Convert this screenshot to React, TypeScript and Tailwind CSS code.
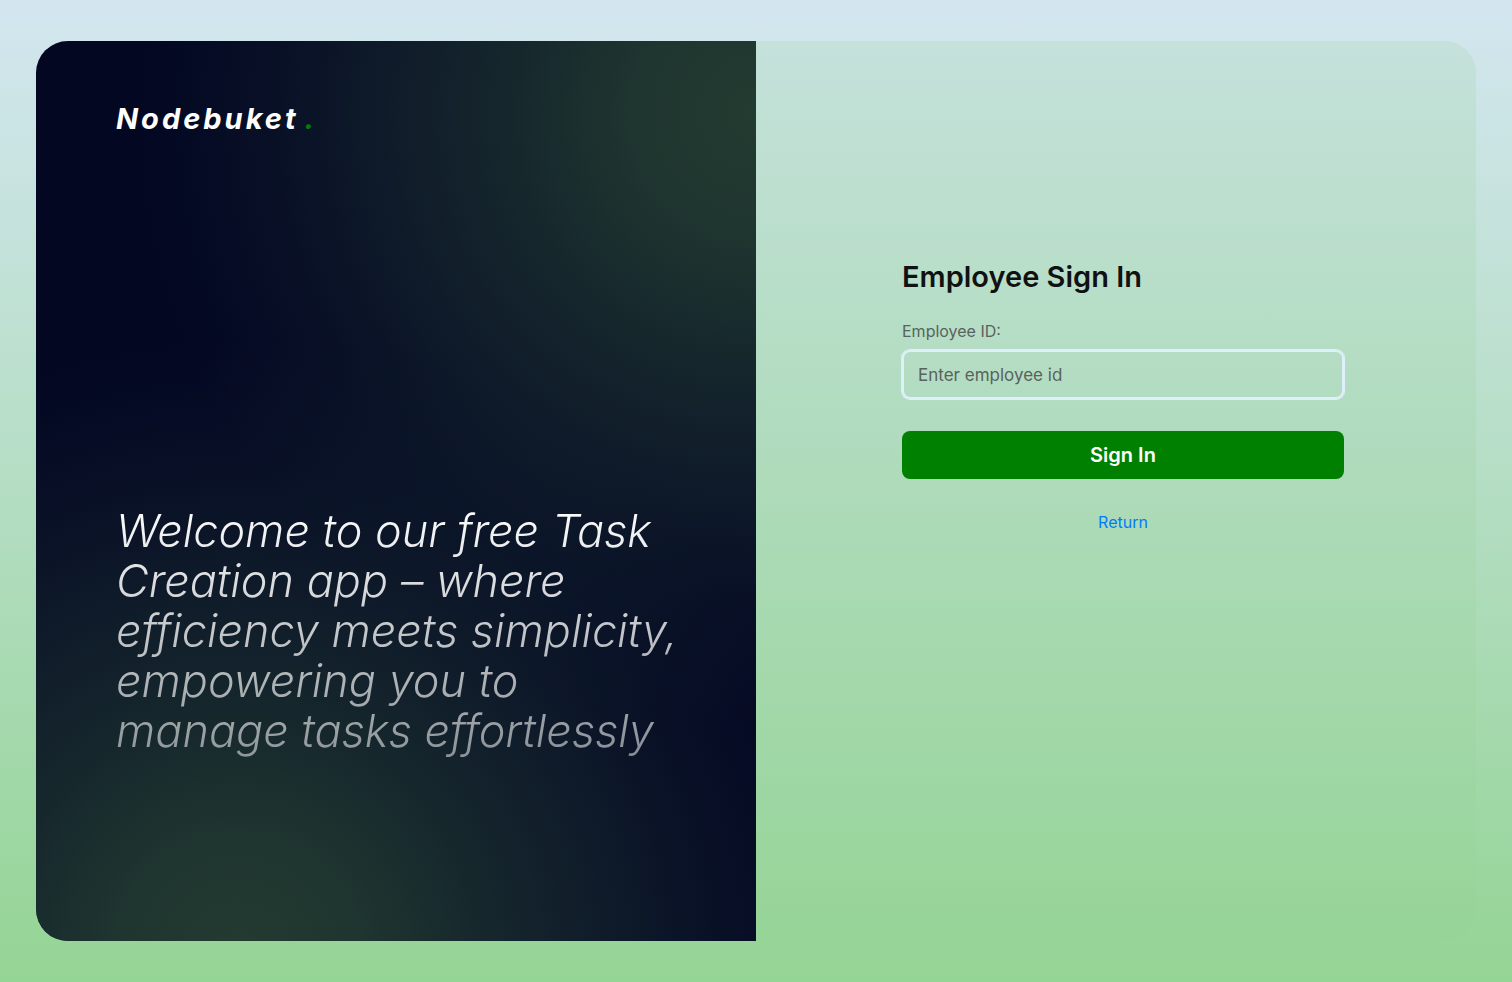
import React from "react";

function BrandPanel() {
  return (
    <section className="flex flex-col justify-between bg-[#030722] bg-[radial-gradient(circle_620px_at_100%_8%,#233b31ff_0%,#223a31e6_20%,#203832a6_40%,#1f36346b_60%,#1a2e3433_80%,#1a2e3400_100%),radial-gradient(circle_620px_at_28%_102%,#233b31ff_0%,#223a31e6_20%,#203832a6_40%,#1f36346b_60%,#1a2e3433_80%,#1a2e3400_100%)] px-20 pt-[60px] pb-[177px] text-white">
      <p className="text-[29px] leading-9 font-bold tracking-[3px] italic">
        Nodebuket<span className="pl-1.5 text-[#008000]">.</span>
      </p>
      <h1 className="bg-linear-to-b from-white to-white/50 bg-clip-text pb-2 text-[45px] leading-[50px] font-light whitespace-nowrap text-transparent italic">
        Welcome to our free Task
        <br />
        Creation app – where
        <br />
        efficiency meets simplicity,
        <br />
        empowering you to
        <br />
        manage tasks effortlessly
      </h1>
    </section>
  );
}

function SignInForm() {
  return (
    <form
      className="flex w-full max-w-[442px] flex-col"
      onSubmit={(event) => event.preventDefault()}
    >
      <h2 className="text-[29px] leading-9 font-semibold text-[#111111]">Employee Sign In</h2>
      <label htmlFor="employee-id" className="mt-6 text-base leading-6 text-[#59625c]">
        Employee ID:
      </label>
      <input
        id="employee-id"
        type="text"
        placeholder="Enter employee id"
        className="mt-[7px] h-[49px] w-full rounded-lg border-2 border-[#dfeffb] bg-transparent px-3.5 text-[17px] text-[#111111] ring-1 ring-[#dfeffb] outline-none placeholder:text-[#59625c]"
      />
      <button type="submit" className="mt-8 h-12 rounded-lg bg-[#008000] text-xl font-semibold text-white">
        Sign In
      </button>
      <a href="#" className="mt-[31px] self-center text-base leading-6 text-[#007bff]">
        Return
      </a>
    </form>
  );
}

export default function App() {
  return (
    <main className="flex min-h-screen bg-linear-to-b from-[#d3e6f0] to-[#94d494] px-9 py-[41px] font-[Inter,sans-serif] [font-feature-settings:'cv11']">
      <div className="grid w-full grid-cols-2 overflow-hidden rounded-[32px] bg-[#94d494]/20">
        <BrandPanel />
        <section className="flex items-start justify-center pt-[218px] pl-[14px]">
          <SignInForm />
        </section>
      </div>
    </main>
  );
}
